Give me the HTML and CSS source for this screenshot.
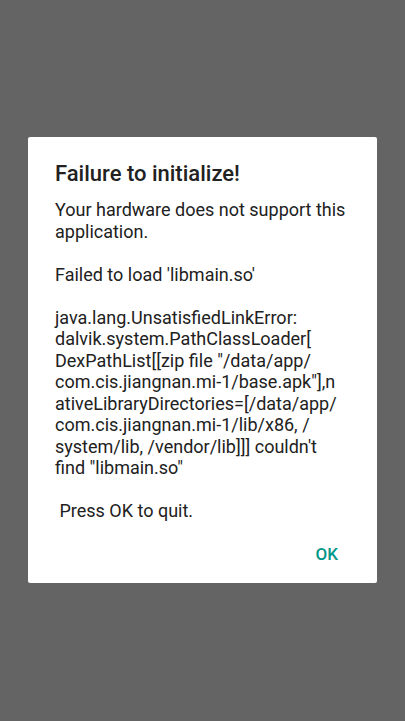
FILE: index.html
```html
<!DOCTYPE html>
<html>
<head>
<meta charset="utf-8">
<link rel="stylesheet" href="styles.css">
</head>
<body>
<div class="screen">
  <div class="dialog">
    <h1 class="title">Failure to initialize!</h1>
    <div class="message">
      <p>Your hardware does not support this<br>application.</p>
      <p>Failed to load 'libmain.so'</p>
      <p>java.lang.UnsatisfiedLinkError:<br>dalvik.system.PathClassLoader[<br>DexPathList[[zip file "/data/app/<br>com.cis.jiangnan.mi-1/base.apk"],n<br>ativeLibraryDirectories=[/data/app/<br>com.cis.jiangnan.mi-1/lib/x86, /<br>system/lib, /vendor/lib]]] couldn't<br>find "libmain.so"</p>
      <p class="quit">&nbsp;Press OK to quit.</p>
    </div>
    <div class="actions">
      <button class="ok">OK</button>
    </div>
  </div>
</div>
</body>
</html>
```
FILE: styles.css
```css
html, body {
  margin: 0;
  padding: 0;
  height: 100%;
}
body {
  background: #646464;
  font-family: Roboto, "Noto Sans", sans-serif;
}
.screen {
  width: 405px;
  height: 721px;
  display: flex;
  justify-content: center;
  align-items: flex-start;
  padding-top: 137px;
  box-sizing: border-box;
}
.dialog {
  width: 349px;
  background: #ffffff;
  border-radius: 2px;
  box-sizing: border-box;
  padding: 24px 0 0 27px;
  height: 446px;
  display: flex;
  flex-direction: column;
}
.title {
  margin: 0;
  font-size: 22px;
  font-weight: 500;
  color: #212121;
  line-height: 26px;
}
.message {
  margin-top: 12px;
  font-size: 18px;
  line-height: 21.5px;
  color: #212121;
}
.message p {
  margin: 0 0 21.5px 0;
}
.message p.quit {
  margin-bottom: 0;
}
.actions {
  display: flex;
  justify-content: flex-end;
  padding-right: 39px;
  margin-top: 22px;
}
.ok {
  background: none;
  border: none;
  padding: 0;
  font-family: Roboto, sans-serif;
  font-size: 17px;
  line-height: 20px;
  font-weight: 500;
  color: #009688;
}
```
